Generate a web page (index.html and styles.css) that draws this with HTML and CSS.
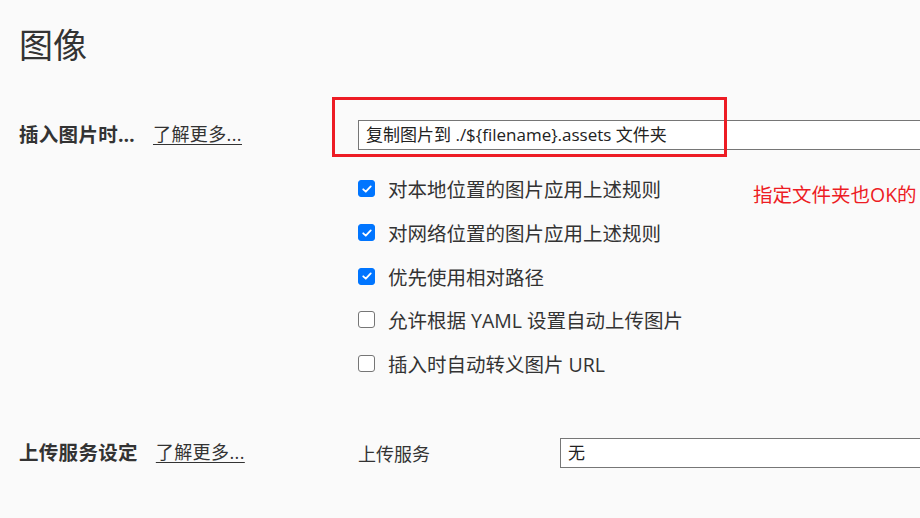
FILE: index.html
```html
<!DOCTYPE html>
<html lang="zh-CN">
<head>
<meta charset="utf-8">
<title>图像</title>
<link rel="stylesheet" href="styles.css">
</head>
<body>
<div class="page">
  <h1 class="title">图像</h1>

  <section class="setting setting-insert">
    <div class="setting-head">
      <span class="setting-name">插入图片时…</span>
      <a class="more" href="#">了解更多...</a>
    </div>
    <div class="setting-body">
      <div class="text-input">复制图片到 ./${filename}.assets 文件夹</div>
      <ul class="checks">
        <li class="check-row"><span class="box checked"><svg viewBox="0 0 16 16" width="12" height="12"><path d="M3 8.4 6.4 11.6 13 4.6" fill="none" stroke="#fff" stroke-width="2.4" stroke-linecap="round" stroke-linejoin="round"/></svg></span><span class="check-label">对本地位置的图片应用上述规则</span></li>
        <li class="check-row"><span class="box checked"><svg viewBox="0 0 16 16" width="12" height="12"><path d="M3 8.4 6.4 11.6 13 4.6" fill="none" stroke="#fff" stroke-width="2.4" stroke-linecap="round" stroke-linejoin="round"/></svg></span><span class="check-label">对网络位置的图片应用上述规则</span></li>
        <li class="check-row"><span class="box checked"><svg viewBox="0 0 16 16" width="12" height="12"><path d="M3 8.4 6.4 11.6 13 4.6" fill="none" stroke="#fff" stroke-width="2.4" stroke-linecap="round" stroke-linejoin="round"/></svg></span><span class="check-label">优先使用相对路径</span></li>
        <li class="check-row"><span class="box"></span><span class="check-label">允许根据 YAML 设置自动上传图片</span></li>
        <li class="check-row"><span class="box"></span><span class="check-label">插入时自动转义图片 URL</span></li>
      </ul>
    </div>
    <div class="red-frame"></div>
    <div class="red-note">指定文件夹也OK的</div>
  </section>

  <section class="setting setting-upload">
    <div class="setting-head">
      <span class="setting-name">上传服务设定</span>
      <a class="more" href="#">了解更多...</a>
    </div>
    <div class="setting-body upload-body">
      <span class="field-label">上传服务</span>
      <div class="select-input">无</div>
    </div>
  </section>
</div>
</body>
</html>
```

FILE: styles.css
```css
html, body {
  margin: 0;
  padding: 0;
  background: #fafafa;
  overflow: hidden;
  width: 920px;
  height: 518px;
}

body {
  font-family: "Open Sans", "Noto Sans CJK SC", sans-serif;
  color: #333;
}

.page {
  padding-left: 19px;
  position: relative;
  width: 920px;
  height: 518px;
  box-sizing: border-box;
  overflow: hidden;
}

.title {
  margin: 0;
  padding-top: 24px;
  font-size: 34px;
  line-height: 42px;
  font-weight: 400;
  color: #333;
}

.setting {
  display: grid;
  grid-template-columns: 339px 1fr;
  position: relative;
}

.setting-insert {
  margin-top: 54px;
}

.setting-head {
  display: flex;
  align-items: center;
  gap: 18px;
  height: 26px;
}

.setting-name {
  font-size: 19.5px;
  font-weight: 700;
  color: #333;
  letter-spacing: 0.3px;
}

.more {
  font-size: 18px;
  color: #333;
  text-decoration: underline;
  text-underline-offset: 3px;
  letter-spacing: 0.4px;
}

.text-input {
  width: 700px;
  height: 28px;
  box-sizing: content-box;
  border: 1px solid #767676;
  background: #fff;
  padding: 0 7px;
  font-size: 17px;
  line-height: 28px;
  color: #222;
  white-space: nowrap;
}

.checks {
  list-style: none;
  margin: 17px 0 0;
  padding: 0;
}

.check-row {
  display: flex;
  align-items: center;
  height: 43.7px;
}

.box {
  width: 17px;
  height: 17px;
  box-sizing: border-box;
  border: 1.5px solid #767676;
  border-radius: 3px;
  background: #fff;
  display: flex;
  align-items: center;
  justify-content: center;
  margin-right: 13px;
  flex: none;
}

.box.checked {
  background: #0075ff;
  border-color: #0075ff;
}

.check-label {
  font-size: 19.5px;
  color: #333;
  white-space: nowrap;
}

.red-frame {
  position: absolute;
  left: 313px;
  top: -23px;
  width: 395px;
  height: 60px;
  box-sizing: border-box;
  border: 3px solid #ed1c24;
}

.red-note {
  position: absolute;
  left: 734px;
  top: 62px;
  font-size: 19.5px;
  line-height: 26px;
  color: #ed1c24;
  white-space: nowrap;
}

.setting-upload {
  margin-top: 53px;
}

.upload-body {
  display: flex;
  align-items: center;
}

.field-label {
  width: 202px;
  font-size: 18px;
  color: #333;
}

.select-input {
  width: 500px;
  height: 28px;
  border: 1px solid #767676;
  background: #fff;
  padding: 0 7px;
  font-size: 17px;
  line-height: 28px;
  color: #222;
}
```
